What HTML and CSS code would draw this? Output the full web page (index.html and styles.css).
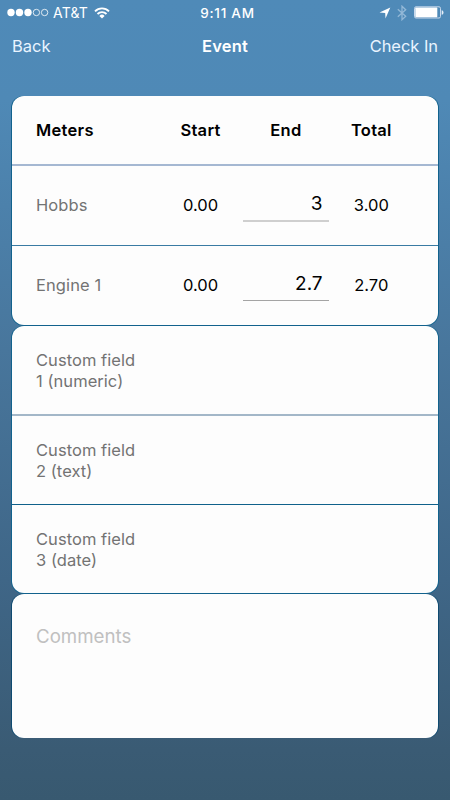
FILE: index.html
```html
<!DOCTYPE html>
<html lang="en">
<head>
<meta charset="utf-8">
<title>Event</title>
<link rel="stylesheet" href="styles.css">
</head>
<body>
<div class="status">
  <div class="carrier">
    <svg width="42" height="10" viewBox="0 0 42 10"><g fill="#fff"><circle cx="4" cy="4.5" r="3.7"/><circle cx="12.5" cy="4.5" r="3.7"/><circle cx="21" cy="4.5" r="3.7"/></g><g fill="none" stroke="#fff" stroke-width=".8"><circle cx="29.4" cy="4.5" r="3.2"/><circle cx="37.6" cy="4.5" r="3.2"/></g></svg>
    <span class="network">AT&amp;T</span>
    <svg class="wifi" width="16" height="12" viewBox="0 0 16 12"><g fill="none" stroke="#fff" stroke-width="1.9"><path d="M1 4.3a9.9 9.9 0 0 1 14 0"/><path d="M3.5 7a6.4 6.4 0 0 1 9 0"/></g><path d="M8 11.6 5.4 8.9a3.7 3.7 0 0 1 5.2 0z" fill="#fff"/></svg>
  </div>
  <span class="clock">9:11 AM</span>
  <div class="indicators">
    <svg width="12" height="12" viewBox="0 0 12 12"><path d="M11.3.6 6.5 11.4 6.2 6 .5 5.6z" fill="#fff"/></svg>
    <svg class="bluetooth" width="10" height="16" viewBox="0 0 10 16"><path d="M.8 4.2 8.7 11.2 5 14.7V1.2l3.7 3.5L.8 11.7" fill="none" stroke="#93b8d7" stroke-width="1.3"/></svg>
    <svg class="battery" width="30" height="13" viewBox="0 0 30 13"><rect x=".5" y=".8" width="26" height="11.2" rx="1.5" fill="none" stroke="#c7d8ec"/><rect x="1.3" y="1.6" width="22" height="9.6" rx=".6" fill="#fff"/><path d="M27.7 4.2c2.4.7 2.4 3.9 0 4.6z" fill="#e6eef7"/></svg>
  </div>
</div>
<nav class="nav">
  <span class="back">Back</span>
  <span class="title">Event</span>
  <span class="action">Check In</span>
</nav>
<main class="cards">
  <section class="card">
    <div class="row meter header"><span class="label">Meters</span><span>Start</span><span>End</span><span>Total</span></div>
    <div class="row meter"><span class="label">Hobbs</span><span>0.00</span><span class="input light">3</span><span>3.00</span></div>
    <div class="row meter strong"><span class="label">Engine 1</span><span>0.00</span><span class="input">2.7</span><span>2.70</span></div>
  </section>
  <section class="card">
    <div class="row field">Custom field<br>1 (numeric)</div>
    <div class="row field soft">Custom field<br>2 (text)</div>
    <div class="row field deep">Custom field<br>3 (date)</div>
  </section>
  <section class="card comments">Comments</section>
</main>
</body>
</html>
```

FILE: styles.css
```css
* { box-sizing: border-box; }
body {
  margin: 0;
  height: 800px;
  overflow: hidden;
  font: 370 16.5px/20px Inter, "Liberation Sans", sans-serif;
  color: #000;
  background: linear-gradient(#4f8ab8 0, #4f89b6 100px, #48769c 350px, #3f6687 580px, #3a5b74 750px, #385970 100%);
}
svg { display: block; flex: none; }
.status {
  display: grid;
  grid-template-columns: 1fr auto 1fr;
  align-items: center;
  height: 25px;
  padding: 0 6px 0 7px;
  color: #fff;
}
.carrier, .indicators { display: flex; align-items: center; }
.indicators { justify-content: flex-end; }
.network { margin-left: 4px; font-size: 14px; letter-spacing: .2px; }
.wifi { margin-left: 6px; }
.clock { margin-left: 4px; font-size: 13.5px; font-weight: 500; letter-spacing: .75px; }
.bluetooth { margin-left: 6px; }
.battery { margin-left: 7px; }
.nav {
  display: grid;
  grid-template-columns: 1fr auto 1fr;
  align-items: center;
  height: 43px;
  padding: 0 12px 2px;
  color: #e9f4ff;
}
.title { font-weight: 600; color: #fff; letter-spacing: .15px; }
.action { text-align: right; letter-spacing: -.05px; }
.cards {
  display: flex;
  flex-direction: column;
  gap: 1px;
  margin: 28px 12px 0;
}
.card {
  overflow: hidden;
  border-radius: 12px;
  background: #fdfdfd;
  box-shadow: -1px 0 #12628d, 1px 0 #12628d, 0 1px #12628d;
}
.card.comments { box-shadow: -1px 0 #0f4a70, 1px 0 #0f4a70; }
.row { border-top: 1px solid #10618b; padding: 0 24px; }
.row:first-child { border-top: 0; }
.meter {
  display: grid;
  grid-template-columns: 1fr repeat(3, 85.4px);
  align-items: center;
  height: 81px;
  padding-bottom: 1px;
  text-align: center;
  border-top: 2px solid #a5b8d2;
}
.meter.header { height: 68px; padding-bottom: 0; font-weight: 600; letter-spacing: .3px; }
.meter.strong { height: 80px; border-top: 1px solid #397ba3; }
.meter .label { text-align: left; color: #737373; }
.meter .label { letter-spacing: .1px; }
.meter.header .label { color: #000; letter-spacing: .3px; }
.meter .input {
  height: 35px;
  margin-top: -4px;
  padding: 6px 6px 0 0;
  border-bottom: 1px solid #a4a4a4;
  font-size: 19px;
  line-height: 24px;
  text-align: right;
}
.meter .input.light { height: 36px; margin-top: -3px; border-bottom: 2px solid #cfcfcf; }
.field {
  height: 88px;
  padding-top: 24px;
  line-height: 20.5px;
  letter-spacing: .05px;
  color: #737373;
}
.field.soft { height: 90px; border-top: 2px solid #a3b7c8; }
.field.deep { height: 89px; border-top-color: #10618b; }
.comments {
  height: 144px;
  padding: 31px 24px;
  font-size: 18.7px;
  line-height: 24px;
  color: #c0c0c0;
}
```
